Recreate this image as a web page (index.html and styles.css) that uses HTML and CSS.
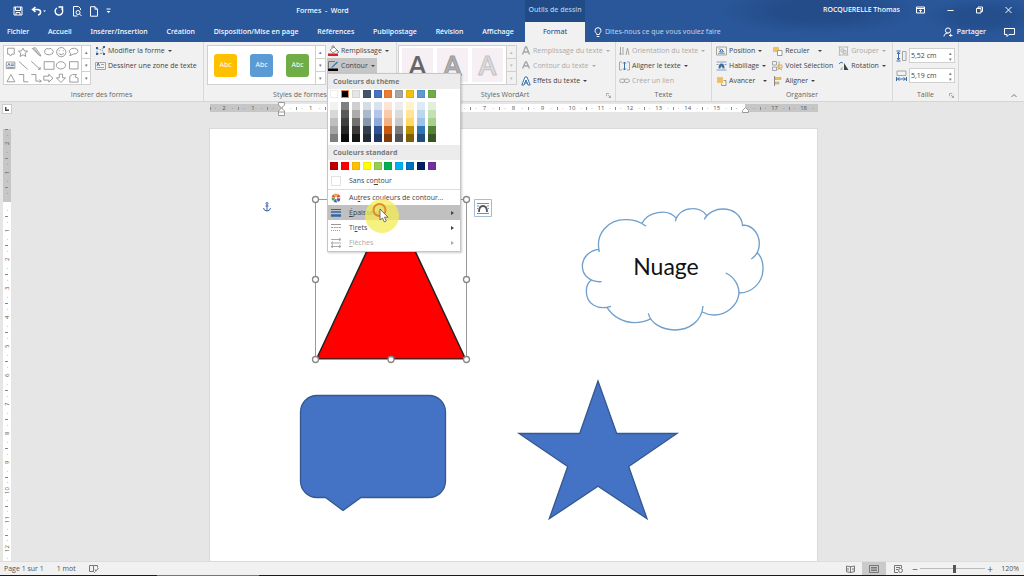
FILE: index.html
```html
<!DOCTYPE html>
<html lang="fr">
<head>
<meta charset="utf-8">
<title>Formes - Word</title>
<link rel="stylesheet" href="styles.css">
</head>
<body>
<div class="app">
<header class="header">
  <div class="title-left">
    <div class="qat">
      <button aria-label="Enregistrer"><svg width="10" height="10" viewBox="0 0 10 10" class="line"><path d="M1 1h8v8H1zM2.500 1v3.500h5V1M3 9V6.500h4V9"/></svg></button>
      <button aria-label="Annuler"><svg width="15" height="10" viewBox="0 0 15 10" class="line"><path d="M4.500 1L1.500 3.500l3 2.500M2 3.500h4.500c4 0 4 5 .500 5.500" stroke-width="1.500"/><path d="M12 4.500h3l-1.500 1.500z" class="solid"/></svg></button>
      <button aria-label="Rétablir"><svg width="10" height="10" viewBox="0 0 10 10" class="line"><path d="M3 2a3.800 3.800 0 1 0 4.500.500M4.500 1h4v3.500" stroke-width="1.400"/></svg></button>
      <button aria-label="Aperçu"><svg width="10" height="11" viewBox="0 0 10 11" class="line"><path d="M8.500 4V2.500L6.500.500h-5v9.500h4M9.500 10L7.500 8"/><circle cx="6" cy="6.500" r="2"/></svg></button>
      <button aria-label="Nouveau"><svg width="8" height="11" viewBox="0 0 8 11" class="line"><path d="M.500.700h4.500l2.500 2.500v7H.500zM5 .700v2.500h2.500"/></svg></button>
      <button aria-label="Personnaliser"><svg width="5" height="6" viewBox="0 0 5 6" class="line"><path d="M.500 1h4"/><path d="M.500 3h4l-2 2z" class="solid"/></svg></button>
    </div>
    <h1 class="doc-title">Formes&nbsp; -&nbsp; Word</h1>
  </div>
  <div class="context-title">Outils de dessin</div>
  <div class="title-right">
    <span>ROCQUERELLE Thomas</span>
    <button aria-label="Options du ruban"><svg width="9" height="8" viewBox="0 0 9 8" class="line"><path d="M.500 1h8v6h-8zM.500 2.500h8M4.500 6.500V4M3.200 5l1.300-1.300L5.800 5"/></svg></button>
    <button aria-label="Réduire"><svg width="7" height="8" viewBox="0 0 7 8" class="line"><path d="M.500 4.500h6"/></svg></button>
    <button aria-label="Restaurer"><svg width="7" height="8" viewBox="0 0 7 8" class="line"><path d="M.500 2.500h4.500v4.500H.500zM2 2.500V1h4.500v4.500H5"/></svg></button>
    <button aria-label="Fermer"><svg width="7" height="8" viewBox="0 0 7 8" class="line"><path d="M.500 1l6 6M6.500 1l-6 6"/></svg></button>
  </div>
  <nav class="tabs">
    <button>Fichier</button><button>Accueil</button><button>Insérer/Insertion</button><button>Création</button><button>Disposition/Mise en page</button><button>Références</button><button>Publipostage</button><button>Révision</button><button>Affichage</button>
  </nav>
  <button class="tab-active">Format</button>
  <div class="tab-right">
    <label class="tell"><svg width="8" height="11" viewBox="0 0 8 11" class="line"><path d="M2.700 7.500C2.700 6 1 5.500 1 3.700a3 3 0 0 1 6 0C7 5.500 5.300 6 5.300 7.500zM2.700 9.500h2.600"/></svg><input type="text" placeholder="Dites-nous ce que vous voulez faire"></label>
    <button class="share"><svg width="10" height="10" viewBox="0 0 10 10" class="line"><circle cx="5" cy="3.500" r="2.600"/><path d="M1 9.500c0-2 1.500-3.300 3.500-3.300M6 8.500h3.500M7.700 6.700v3"/></svg>Partager</button>
    <button aria-label="Commentaires"><svg width="11" height="9" viewBox="0 0 11 9" class="line"><path d="M.500.500h10v6H5L3 8.500v-2H.500z"/></svg></button>
  </div>
</header>

<section class="ribbon" aria-label="Format">
  <div class="group g-insert">
    <div class="group-body">
      <div class="gallery shapes">
        <svg class="shape-art" viewBox="0 0 234 114" role="img" aria-label="Formes">
          <path d="M11 6h20v18h-7l-4 6-4-6h-5zM58 6l4 8 10 1-8 6 2 10-8-5-9 5 2-10-7-6 9-1zM86 7l9-3 14 19 3 7-7-4zM91 6l16 21M125 11q4-6 11-3 8-4 11 3 6 5 0 12-9 6-20 1-7-5-2-13z"/>
          <circle cx="174" cy="18" r="14"/><path d="M166 22q8 8 16 0M168 12v3M180 12v3M200 29l3-6q-6-5-4-10 4-8 15-7 12 2 11 10-2 9-15 8z"/>
          <path d="M7 48h26v20H7zM45 46l27 24M83 46l27 24M103 70h7v-7M122 47h30v23h-30zM199 47h26v22h-26z"/><ellipse cx="173" cy="58" rx="14" ry="11"/>
          <path d="M21 86l12 22H9zM45 86h15v22h14M83 86h14v20h16M108 101l5 5-5 5M121 91h15v-6l13 12-13 12v-6h-15zM168 85h10v11h9l-14 14-14-14h9zM200 91l8-5h12l-4 7 9 4v12h-25z"/>
          <path d="M11 60l4-8 4 8M21 54h9M21 58h9M10 64h20" class="blue"/>
        </svg>
        <div class="scroller"><button aria-label="Haut">▴</button><button aria-label="Bas">▾</button><button aria-label="Plus">▾</button></div>
      </div>
      <div class="stack">
        <button><svg width="11" height="10" viewBox="0 0 11 10"><path d="M2 2l3 2 4-3M2 2v6l7-1M9 1L7 5l2 3" class="dash"/><path d="M1 1h2v2H1zM8 0h2v2H8zM1 7h2v2H1zM8 7h2v2H8z" fill="#2f639d"/></svg>Modifier la forme<i></i></button>
        <button><svg width="11" height="10" viewBox="0 0 11 10" class="grey"><path d="M.500 1.500h10v7H.500z"/><path d="M2 5l1.200-3L4.500 5" class="blue"/><path d="M6 3.500h3M2 6.500h7"/></svg>Dessiner une zone de texte</button>
      </div>
    </div>
    <div class="group-label">Insérer des formes</div>
  </div>

  <div class="group g-styles">
    <div class="group-body">
      <div class="gallery">
        <div class="tiles"><button class="tile gold">Abc</button><button class="tile blue-bg">Abc</button><button class="tile green">Abc</button></div>
        <div class="scroller"><button aria-label="Haut">▴</button><button aria-label="Bas">▾</button><button aria-label="Plus">▾</button></div>
      </div>
      <div class="stack">
        <button><svg width="12" height="12" viewBox="0 0 12 12"><path d="M3 5l4-3 3 3-4 3zM5 3V1h2v2" fill="#fff" stroke="#777" stroke-width=".800"/><path d="M10 5q2 1 1 3" stroke="#3a77b8" fill="none"/><path d="M1 8.500h10V11H1z" fill="#e01b24"/></svg>Remplissage<i></i></button>
        <div class="menu-anchor">
          <button class="pressed" aria-expanded="true"><svg width="12" height="12" viewBox="0 0 12 12"><path d="M8 1.500H1.500V8" stroke="#777" fill="none"/><path d="M4 7.500L10 1.500l1 1L5.500 7.500z" fill="#2e75b6"/><path d="M1 8.500h10V11H1z" fill="#000"/></svg>Contour<i></i></button>
          <div class="menu" role="menu">
            <h2>Couleurs du thème</h2>
            <div class="swatches" id="theme"></div>
            <div class="swatches shades" id="shades"></div>
            <h2>Couleurs standard</h2>
            <div class="swatches standard" id="standard"></div>
            <button class="item none" role="menuitem"><span class="nobox"></span>Sans co<u>n</u>tour</button>
            <button class="item" role="menuitem"><svg width="10" height="10" viewBox="0 0 10 10"><circle cx="5" cy="5" r="4.700" fill="#fff"/><path d="M5 5L3 1A4.500 4.500 0 0 1 6.500.800z" fill="#e5a33b"/><path d="M5 5l2-4a4.500 4.500 0 0 1 2.400 3z" fill="#d9534a"/><path d="M5 5l4.500.400A4.500 4.500 0 0 1 7 9z" fill="#7c4f92"/><path d="M5 5l1 4.500a4.500 4.500 0 0 1-3.500-1z" fill="#356dac"/><path d="M5 5L2 8A4.500 4.500 0 0 1 .500 5z" fill="#5a9f52"/><path d="M5 5L.600 4.200A4.500 4.500 0 0 1 2.500 1.300z" fill="#d9583b"/><circle cx="5" cy="5" r="1.300" fill="#fff"/></svg>Au<u>t</u>res couleurs de contour...</button>
            <button class="item active" role="menuitem"><svg width="10" height="10" viewBox="0 0 10 10" stroke="#3565a5"><path d="M0 1.500h10"/><path d="M0 4h10" stroke-width="1.500"/><path d="M0 7.500h10" stroke-width="2.500"/></svg><u>É</u>paisseur<b></b></button>
            <button class="item" role="menuitem"><svg width="10" height="10" viewBox="0 0 10 10" stroke="#999"><path d="M0 1.500h10"/><path d="M0 4.500h10" stroke-dasharray="2 .700"/><path d="M0 7.500h10" stroke-dasharray="1 1"/></svg>Ti<u>r</u>ets<b></b></button>
            <button class="item" role="menuitem" disabled><svg width="10" height="10" viewBox="0 0 10 10" stroke="#aaa" fill="none"><path d="M0 1.500h10M8 0l2 1.500L8 3M0 5h10M2 3.500L0 5l2 1.500M0 8.500h10M2 7L0 8.500 2 10M8 7l2 1.500L8 10"/></svg><u>F</u>lèches<b></b></button>
            <svg class="pointer" width="36" height="36" viewBox="0 0 36 36"><circle cx="18" cy="18" r="17" fill="#f4ed55" fill-opacity=".75"/><circle cx="15.500" cy="12" r="6" fill="none" stroke="#e3892b" stroke-width="2"/><path d="M16 11v11l2.500-2 1.800 4 2-1-1.800-3.800h3.500z" fill="#fff" stroke="#555" stroke-width=".800"/></svg>
          </div>
        </div>
      </div>
    </div>
    <div class="group-label">Styles de formes</div>
  </div>

  <div class="group g-wordart">
    <div class="group-body">
      <div class="gallery">
        <div class="tiles wa"><button class="wa1">A</button><button class="wa2">A</button><button class="wa3">A</button></div>
        <div class="scroller off"><button aria-label="Haut">▴</button><button aria-label="Bas">▾</button><button aria-label="Plus">▾</button></div>
      </div>
      <div class="stack">
        <button disabled><svg width="10" height="10" viewBox="0 0 10 10" class="grey"><path d="M1.500 8.500L4.500 1h1l3 7.500M3 6h4" stroke-width="1.300"/></svg>Remplissage du texte<i></i></button>
        <button disabled><svg width="10" height="10" viewBox="0 0 10 10" class="grey"><path d="M1.500 7.500L4.500 1h1l3 6.500M3 5h4" stroke-width="1.300"/></svg>Contour du texte<i></i></button>
        <button><svg width="10" height="10" viewBox="0 0 10 10"><path d="M.800 9L4 1h2l3.200 8H7L5 4 3 9zM3.500 7h3" fill="#fff" stroke="#3471ac"/></svg>Effets du texte<i></i></button>
      </div>
    </div>
    <div class="group-label">Styles WordArt<svg class="launch" viewBox="0 0 6 6"><path d="M.500 4V.500H4M2.500 2.500l3 3M5.500 3v2.500H3"/></svg></div>
  </div>

  <div class="group g-text">
    <div class="group-body">
      <div class="stack">
        <button disabled><svg width="11" height="10" viewBox="0 0 11 10" class="grey"><path d="M1.500 1v8M4 1v8M7 9l1.500-7L10 9M.500 7.500l1 1.500 1-1.500"/></svg>Orientation du texte<i></i></button>
        <button><svg width="11" height="10" viewBox="0 0 11 10" class="grey"><path d="M3 1H.500v8H3M8 1h2.500v8H8"/><path d="M5.500 1v8M4 2.500L5.500 1 7 2.500M4 7.500L5.500 9 7 7.500" class="blue"/></svg>Aligner le texte<i></i></button>
        <button disabled><svg width="11" height="10" viewBox="0 0 11 10" class="grey"><rect x=".700" y="3" width="5" height="3.500" rx="1.700"/><rect x="5.300" y="3" width="5" height="3.500" rx="1.700"/></svg>Créer un lien</button>
      </div>
    </div>
    <div class="group-label">Texte</div>
  </div>

  <div class="group g-arrange">
    <div class="group-body spread">
      <div class="stack">
        <button><svg width="11" height="10" viewBox="0 0 11 10" class="grey"><path d="M.500 1h10v8H.500zM2.500 3h2M2 7.500h7"/><path d="M3.500 6l2-3 2 3z" class="blue"/></svg>Position<i></i></button>
        <button><svg width="11" height="10" viewBox="0 0 11 10" class="blue"><path d="M.500 1h10M.500 3.500h2M8.500 3.500h2M.500 9h10" stroke="#7fa3c9"/><path d="M2.500 7.500q0-5 3-5t3 5h-2q0-2-1-2t-1 2z" fill="#456c94" stroke="none"/></svg>Habillage<i></i></button>
        <button><svg width="11" height="10" viewBox="0 0 11 10"><path d="M1 1h6v6H1z" fill="#f2bf61"/><path d="M7.500 4.500H10v5H5.500V7.500" stroke="#999" fill="none"/></svg>Avancer <i class="wide"></i></button>
      </div>
      <div class="stack">
        <button><svg width="11" height="10" viewBox="0 0 11 10"><path d="M1 1h6v5H1z" fill="#f2bf61"/><path d="M5.500 4.500h4.500v5H5.500z" stroke="#999" fill="#fff"/></svg>Reculer <i class="wide"></i></button>
        <button><svg width="11" height="10" viewBox="0 0 11 10" class="grey"><path d="M.500.500h4v3.500h-4zM.500 6h4v3.500h-4zM7 .500v7M7 7l-1.500 2M7 7l3 2"/><path d="M6 4h4v3H6z" stroke="#e8a936"/></svg>Volet Sélection</button>
        <button><svg width="11" height="10" viewBox="0 0 11 10"><path d="M2.500 0v10" stroke="#888"/><path d="M3 1.500h6v2H3z" fill="#f2bf61" stroke="#999" stroke-width=".500"/><path d="M3 6h4v2H3z" fill="#f2bf61" stroke="#999" stroke-width=".500"/></svg>Aligner<i></i></button>
      </div>
      <div class="stack">
        <button disabled><svg width="11" height="10" viewBox="0 0 11 10" class="grey"><path d="M1.500 1h8v8h-8zM.500 1h2M8.500 1h2M.500 9h2M8.500 9h2M3 3h3v3H3zM5 4.500h3v3H5z" stroke="#bbb"/></svg>Grouper<i></i></button>
        <button><svg width="11" height="10" viewBox="0 0 11 10"><path d="M6 2v7h4.500z" fill="#444"/><path d="M4.500 9V5L2 9z" fill="#9ab9d8"/><path d="M1 3q2-3 4-1" stroke="#3a77b8" fill="none"/></svg>Rotation<i></i></button>
      </div>
    </div>
    <div class="group-label">Organiser</div>
  </div>

  <div class="group g-size">
    <div class="group-body sizes">
      <label class="size"><svg width="11" height="12" viewBox="0 0 11 12" class="grey"><path d="M6.500 1.500H10v9H6.500z"/><path d="M.500 1h4M.500 11h4M2.500 2v8M1 4l1.500-2L4 4M1 8l1.500 2L4 8" class="blue"/></svg><span class="spin"><input type="text" value="5,52 cm" aria-label="Hauteur"><span>▴<br>▾</span></span></label>
      <label class="size"><svg width="11" height="12" viewBox="0 0 11 12" class="grey"><path d="M1 1h9v4.500H1z"/><path d="M.500 7v4M10.500 7v4M1.500 9h8M3.500 7.500L1.500 9l2 1.500M7.500 7.500l2 1.500-2 1.500" class="blue"/></svg><span class="spin"><input type="text" value="5,19 cm" aria-label="Largeur"><span>▴<br>▾</span></span></label>
    </div>
    <div class="group-label">Taille<svg class="launch" viewBox="0 0 6 6"><path d="M.500 4V.500H4M2.500 2.500l3 3M5.500 3v2.500H3"/></svg></div>
  </div>
  <button class="collapse" aria-label="Réduire le ruban"><svg width="6" height="5" viewBox="0 0 6 5" class="dark"><path d="M.500 4L3 1.500 5.500 4"/></svg></button>
</section>

<main class="workspace">
  <div class="ruler-row">
    <button class="tab-stop" aria-label="Tabulation"><svg width="4" height="4" viewBox="0 0 4 4"><path d="M.700 0v3.300H4" fill="none" stroke="#444" stroke-width="1.400"/></svg></button>
    <div class="hruler" id="hruler">
      <svg class="indent start" width="7" height="14" viewBox="0 0 7 14"><path d="M.500.500h6v2.500l-3 3-3-3zM3.500 6l3 3v4.500h-6V9zM.500 10h6"/></svg>
      <svg class="indent end" width="7" height="6" viewBox="0 0 7 6"><path d="M3.500.500l3 3v2h-6v-2z"/></svg>
    </div>
  </div>
  <div class="canvas">
    <div class="vruler" id="vruler"></div>
    <article class="sheet">
      <svg class="drawing" width="607" height="432" viewBox="210 129 607 432">
        <g fill="#4472c4" stroke="#34588f" stroke-width="1.300">
          <path d="M317 395.500h112a16.500 16.500 0 0 1 16.500 16.500v69a16.500 16.500 0 0 1-16.500 16.500h-68l-18 13-17.500-13h-8.500a16.500 16.500 0 0 1-16.500-16.500v-69a16.500 16.500 0 0 1 16.500-16.500z"/>
          <path d="M598 381l18.700 52.500h60.300l-48.300 33L647 518.700l-49-32.400-48.700 32.400 18.400-52.200-48.700-33h60.700z"/>
        </g>
        <path d="M316.500 359L391 199.500 465.500 359z" fill="#f00" stroke="#222" stroke-width="1.500"/>
        <g transform="translate(560 190) scale(.3333)" fill="none" stroke="#6f9fcb" stroke-width="4">
          <path d="M118 186C105 130 145 88 198 89C220 88 242 96 258 109M246 100C262 68 320 52 349 85L346 94C352 68 375 56 397 56C415 55 432 64 440 77L433 88C445 65 470 57 488 57C520 57 546 75 548 109M548 105C580 105 598 135 598 160C598 180 590 197 574 207M592 188C604 200 610 220 609 240C607 280 575 308 538 309M497 249C522 260 537 285 537 310C533 350 495 375 463 375C450 375 438 372 427 366M429 348C426 395 385 420 345 420C300 418 272 398 265 370M273 386C255 396 235 398 222 398C190 397 158 380 141 352M153 349C110 362 80 340 79 305C79 290 84 278 93 271M125 275C90 278 67 255 67 228C68 200 90 180 118 178"/>
        </g>
        <text x="666" y="275" text-anchor="middle" class="cloud-text">Nuage</text>
        <path d="M315.500 199.500h151v160h-151z" fill="none" stroke="#999"/>
        <g fill="#fff" stroke="#888" stroke-width="1.300"><circle cx="315.500" cy="199.500" r="3"/><circle cx="466.500" cy="199.500" r="3"/><circle cx="315.500" cy="279.500" r="3"/><circle cx="466.500" cy="279.500" r="3"/><circle cx="315.500" cy="359.500" r="3"/><circle cx="391" cy="359.500" r="3"/><circle cx="466.500" cy="359.500" r="3"/></g>
        <g fill="none" stroke="#3565a5"><circle cx="267" cy="203.500" r="1"/><path d="M267 205v6M265.500 206h3M263.500 208q.500 3 3.500 3t3.500-3"/></g>
        <path d="M474.500 199.500h17v17h-17z" fill="#fff" stroke="#a9bdd2"/>
        <path d="M477 203.500h12M477 206h2M487 206h2M477 208.500h1M488 208.500h1M477 213.500h12" stroke="#6c93bb"/><path d="M479 212q0-6 4-6t4 6" fill="none" stroke="#555" stroke-width="1.800"/>
      </svg>
    </article>
  </div>
</main>

<footer class="status">
  <span>Page 1 sur 1</span><span>1 mot</span>
  <button aria-label="Vérification"><svg width="10" height="9" viewBox="0 0 10 9" class="dark"><path d="M4.500 1.500H.500v6h4zM4.500 1.500h4v2M4.500 7.500l1 1 1-1M6 5.500l1 1.500 2.500-3"/></svg></button>
  <div class="status-right">
    <button class="view" aria-label="Lecture"><svg width="9" height="8" viewBox="0 0 9 8" class="dark"><path d="M.500 1l4 .800v5.700l-4-.800zM8.500 1l-4 .800v5.700l4-.800zM2 3v2.500M7 3v2.500"/></svg></button>
    <button class="view current" aria-label="Page"><svg width="10" height="8" viewBox="0 0 10 8" class="dark"><path d="M.500.500h9v7h-9zM2 2.500h6M2 4h6M2 5.500h6"/></svg></button>
    <button class="view" aria-label="Web"><svg width="9" height="8" viewBox="0 0 9 8" class="dark"><path d="M4 7.500H.500v-7h7V3M2 2.500h4M2 4.500h2"/><circle cx="6.500" cy="5.500" r="2"/></svg></button>
    <button class="zoom-btn" aria-label="Zoom arrière">−</button>
    <input type="range" class="zoom" min="0" max="100" value="53" aria-label="Zoom">
    <button class="zoom-btn" aria-label="Zoom avant">+</button>
    <output>120%</output>
  </div>
</footer>
<div class="edge"></div>
</div>
<script src="script.js"></script>
</body>
</html>
```
FILE: styles.css
```css
* { box-sizing: border-box; }
body {
  margin: 0;
  font-family: "Open Sans", "Noto Sans", sans-serif;
  font-size: 7px;
  line-height: 10px;
  color: #444;
  background: #e6e6e6;
}
button, input { font: inherit; color: inherit; background: none; border: 0; padding: 0; margin: 0; }
button { white-space: nowrap; display: flex; align-items: center; }
svg { flex: none; display: block; }
.line { fill: none; stroke: #fff; }
.line .solid { fill: #fff; stroke: none; }
.grey { fill: none; stroke: #a5a5a5; }
.dark { fill: none; stroke: #777; }
.blue { fill: none; stroke: #3a6fa5; }
.dash { fill: none; stroke: #7d9cbd; stroke-dasharray: 2 1; }
.app { height: 100vh; display: flex; flex-direction: column; overflow: hidden; }

/* Title bar and tabs */
.header {
  display: grid;
  grid-template-columns: 525px 60px 1fr;
  grid-template-rows: 22px 20px;
  color: #fff;
  font-family: "Noto Sans", "Open Sans", sans-serif;
  font-weight: 500;
  background:
    radial-gradient(ellipse 100px 24px at 80% 25%, #234c88 40%, transparent 100%),
    radial-gradient(ellipse 60px 18px at 96% 40%, #244e8c 40%, transparent 100%),
    #2a579a;
}
.title-left { display: flex; align-items: center; }
.qat { display: flex; align-items: center; gap: 8px; padding-left: 13px; width: 120px; }
.doc-title { flex: 1; margin: 0; font-size: 7px; font-weight: 500; text-align: center; }
.context-title { background: #204b87; color: #bccbe2; text-align: center; line-height: 20px; }
.title-right { display: flex; align-items: center; justify-content: flex-end; gap: 22px; padding: 0 12px 2px 0; }
.title-right span { margin-right: -6px; }
.tabs { display: flex; justify-content: space-between; align-items: center; padding: 0 11px 0 7px; }
.tab-active { background: #f1f1f1; color: #2a579a; justify-content: center; }
.tab-right { display: flex; align-items: center; padding: 0 9px 0 9px; gap: 18px; }
.tell { display: flex; align-items: center; gap: 3px; flex: 1; font-weight: 400; }
.tell input { flex: 1; }
.tell input::placeholder { color: #c3d1e6; opacity: 1; }
.share { gap: 4px; }

/* Ribbon */
.ribbon { display: flex; background: #f1f1f1; border-bottom: 1px solid #d5d5d5; position: relative; z-index: 2; }
.group { display: flex; flex-direction: column; border-right: 1px solid #d8d8d8; padding: 1px 3px 0; }
.g-insert { width: 204px; }
.g-styles { width: 193px; }
.g-wordart { width: 219px; padding-left: 1px; }
.g-text { width: 96px; }
.g-arrange { width: 181px; }
.g-size { width: 66px; }
.group-body { display: flex; gap: 4px; height: 46px; }
.group-label { display: flex; justify-content: center; line-height: 12px; color: #666; position: relative; }
.launch { position: absolute; right: 1px; top: 4px; width: 5px; height: 5px; fill: none; stroke: #999; }
.stack { display: flex; flex-direction: column; }
.stack button { height: 15px; gap: 2px; padding-right: 2px; }
.stack button:disabled { color: #aaa; }
.stack i { border: 2px solid transparent; border-top-color: currentColor; border-bottom: 0; margin-left: 1px; }
.stack i.wide { margin-left: 6px; }
.gallery { display: flex; background: #fff; border: 1px solid #d0d0d0; height: 40px; margin-top: 2px; width: 119px; }
.shapes { width: 88px; }
.shape-art { width: 77px; height: 38px; fill: none; stroke: #888; stroke-width: 2.500; }
.scroller { width: 10px; margin-left: auto; display: flex; flex-direction: column; border-left: 1px solid #d0d0d0; color: #777; }
.scroller button { flex: 1; justify-content: center; font-size: 5px; line-height: 5px; border-bottom: 1px solid #d0d0d0; }
.scroller button:last-child { border-bottom: 0; }
.scroller.off { background: #f1f1f1; color: #bbb; }
.tiles { flex: 1; display: flex; align-items: center; justify-content: space-between; padding: 0 6px; }
.tile { width: 23px; height: 23px; border-radius: 3px; justify-content: center; color: #fff; }
.gold { background: #ffc000; }
.blue-bg { background: #5b9bd5; }
.green { background: #70ad47; }
.wa { padding: 0 3px; }
.wa button { width: 31px; height: 34px; justify-content: center; background: #f6f0f5; font-size: 27px; font-weight: 600; }
.wa .wa1 { color: #666; }
.wa .wa2 { color: #b0b0b0; -webkit-text-stroke: 1px #999; }
.wa .wa3 { color: #ddd; -webkit-text-stroke: 1px #c2c2c2; }
.g-styles .stack { margin-left: -3px; }
.stack .pressed { background: #c6c6c6; }
.menu-anchor { position: relative; width: max-content; }
.spread { gap: 3px; justify-content: space-between; padding: 0 3px 0 1px; }
.sizes { flex-direction: column; gap: 5px; padding-top: 5px; }
.size { display: flex; align-items: center; gap: 2px; }
.spin { display: flex; flex: 1; height: 15px; background: #fff; border: 1px solid #d0d0d0; align-items: center; }
.spin input { width: 34px; flex: 1; padding-left: 1px; }
.spin span { font-size: 5px; line-height: 6px; padding-right: 2px; color: #777; }
.collapse { margin: auto 7px 3px auto; }

/* Outline colour menu */
.menu {
  position: absolute; top: 15px; left: 0; width: 134px;
  background: #fff; border: 1px solid #c6c6c6; box-shadow: 1px 1px 2px #0003;
  padding-bottom: 1px;
}
.menu h2 { margin: 0; padding-left: 5px; background: #ececec; font-size: 7px; font-weight: 700; line-height: 15px; color: #777; }
.swatches { display: grid; grid-template-columns: repeat(10, 8px); justify-content: space-between; width: 106px; margin: 1px 0 4px 2px; }
.menu .swatches button { height: 8px; padding: 0; border: 1px solid #0001; }
.menu .swatches .chosen { border: 1px solid #e0884c; }
.menu .shades { margin-bottom: 3px; }
.menu .shades button { border: 0; }
.menu .standard { margin: 2px 0 3px 2px; }
.menu .item { width: 100%; height: 15px; gap: 0; padding: 0 6px 0 3px; }
.menu .none { height: 17px; border-bottom: 1px solid #ddd; }
.menu .item > svg, .nobox { margin-right: 8px; }
.nobox { width: 10px; height: 10px; border: 1px solid #e2e2e2; }
.menu u { text-underline-offset: 1px; }
.item b { margin-left: auto; border: 2px solid transparent; border-left: 3px solid currentColor; border-right: 0; }
.menu .active { background: #c0c0c0; }
.pointer { position: absolute; left: 36px; top: 124px; pointer-events: none; }

/* Rulers and page */
.workspace { flex: 1; min-height: 0; display: flex; flex-direction: column; }
.ruler-row { display: flex; justify-content: center; position: relative; padding: 2px 0 17px 3px; }
.tab-stop { position: absolute; left: 2px; top: 2px; width: 10px; height: 10px; background: #fff; border: 1px solid #ccc; justify-content: center; }
.hruler {
  width: 608px; height: 8px; display: grid; grid-template-columns: repeat(21, minmax(0, 1fr)); position: relative;
  background: linear-gradient(to right, #c6c6c6 12%, #fff 12%, #fff 88%, #c6c6c6 88%);
}
.cell { display: flex; align-items: center; justify-content: space-between; font-size: 6px; line-height: 8px; color: #555; }
.cell::before, .cell::after { content: "·"; padding: 0 5px; }
.hruler .cell { background: linear-gradient(#888, #888) left center / 1px 3px no-repeat; }
.indent { position: absolute; fill: #fff; stroke: #999; }
.start { left: 12%; margin-left: -4px; top: -2px; }
.end { left: 88%; margin-left: -3px; top: 3px; }
.canvas { flex: 1; min-height: 0; display: flex; justify-content: center; position: relative; padding-left: 3px; }
.vruler { position: absolute; left: 3px; top: 0; bottom: 0; width: 8px; overflow: hidden; background: linear-gradient(#c6c6c6 73px, #fff 73px); }
.vruler .cell { height: 29px; width: 8px; writing-mode: vertical-rl; transform: rotate(180deg); background: linear-gradient(#888, #888) center bottom / 3px 1px no-repeat; }
.vruler .cell::before, .vruler .cell::after { padding: 5px 0; }
.sheet { background: #fff; overflow: hidden; box-shadow: 0 0 0 1px #dadada; }
.cloud-text { font-family: Lato, "Open Sans", sans-serif; font-size: 23px; fill: #111; }

/* Status bar */
.status { display: flex; align-items: center; height: 14px; gap: 13px; padding: 0 5px 0 4px; background: #f1f1f1; border-top: 1px solid #ddd; color: #555; }
.status-right { margin-left: auto; display: flex; align-items: center; }
.view { width: 24px; height: 13px; justify-content: center; }
.current { background: #cacaca; }
.zoom-btn { width: 10px; justify-content: center; font-size: 10px; }
.zoom { appearance: none; width: 65px; height: 10px; background: linear-gradient(#bbb, #bbb) center / 100% 1px no-repeat; }
.zoom::-webkit-slider-thumb { appearance: none; width: 3px; height: 8px; background: #555; }
.status output { margin-left: 6px; }
.edge { height: 1px; background: linear-gradient(to right, #1b1b1b 157px, #777 157px, #777 259px, #1b1b1b 259px); }
```
FILE: script.js
```js
const theme = ["#fff", "#000", "#e7e6e6", "#44546a", "#4472c4", "#ed7d31", "#a5a5a5", "#f3c011", "#5b9bd5", "#70ad47"];
const shades = [
  ["#f2f2f2", "#7f7f7f", "#d0cece", "#d6dce4", "#d9e2f3", "#fbe5d5", "#ededed", "#fff2cc", "#deebf6", "#e2efd9"],
  ["#d8d8d8", "#595959", "#aeabab", "#adb9ca", "#b4c6e7", "#f7cbac", "#dbdbdb", "#fee599", "#bdd7ee", "#c5e0b3"],
  ["#bfbfbf", "#3f3f3f", "#757070", "#8496b0", "#8eaadb", "#f4b183", "#c9c9c9", "#ffd965", "#9cc3e5", "#a8d08d"],
  ["#a5a5a5", "#262626", "#3a3838", "#323f4f", "#2f5496", "#c55a11", "#7b7b7b", "#bf9000", "#2e75b5", "#538135"],
  ["#7f7f7f", "#0c0c0c", "#171616", "#222a35", "#1f3864", "#833c0b", "#525252", "#7f6000", "#1e4e79", "#375623"]
];
const standard = ["#c00000", "#f00", "#ffc000", "#ff0", "#92d050", "#00b050", "#00b0f0", "#0070c0", "#002060", "#7030a0"];

function fillSwatches(id, colors, chosen) {
  const host = document.getElementById(id);
  colors.forEach((color, i) => {
    const button = document.createElement("button");
    button.style.background = color;
    button.setAttribute("aria-label", color);
    if (i === chosen) button.className = "chosen";
    host.append(button);
  });
}
fillSwatches("theme", theme, 1);
fillSwatches("shades", shades.flat(), -1);
fillSwatches("standard", standard, -1);

function fillRuler(id, last, hidden) {
  const host = document.getElementById(id);
  for (let n = -2; n <= last; n++) {
    const cell = document.createElement("span");
    cell.className = "cell";
    cell.textContent = hidden.includes(n) ? "" : Math.abs(n);
    host.append(cell);
  }
}
fillRuler("hruler", 18, [0, 16]);
fillRuler("vruler", 12, [0]);
```
